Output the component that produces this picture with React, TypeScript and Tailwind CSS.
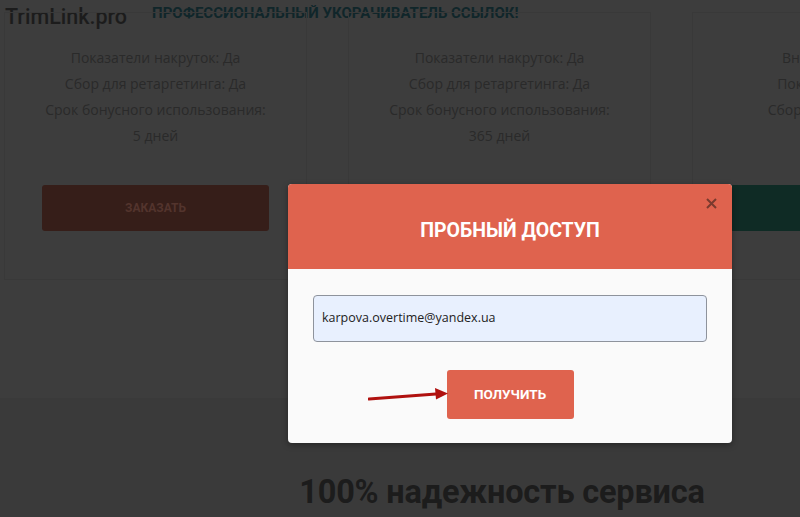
import React from "react";

const cardFont = { fontFamily: '"Open Sans", "Liberation Sans", sans-serif' };
const robo = { fontFamily: 'Roboto, "Liberation Sans", sans-serif' };

function Card({ lines, btnClass, btnText }: { lines: string[]; btnClass: string; btnText: string }) {
  return (
    <div className="w-[303px] shrink-0 border border-[#393939] pt-[32px] pb-[48px] px-[37px] flex flex-col items-center">
      <div className="text-[14px] leading-[26px] text-[#2a2a2a] text-center whitespace-nowrap" style={cardFont}>
        {lines.map((l, i) => (
          <div key={i}>{l === "" ? "\u00a0" : l}</div>
        ))}
      </div>
      <div
        className={`mt-[36px] w-full h-[46px] rounded-[3px] flex items-center justify-center text-[12px] font-bold ${btnClass}`}
        style={robo}
      >
        {btnText}
      </div>
    </div>
  );
}

export default function App() {
  return (
    <div className="relative w-[800px] h-[517px] overflow-hidden bg-[#3d3d3d]">
      <div className="w-[1004px]">
        {/* header */}
        <div className="h-[33px] flex items-center pl-[5px]">
          <span className="text-[21.5px] font-medium text-[#1c1c1c] leading-none" style={robo}>
            TrimLink.pro
          </span>
          <span className="ml-[25px] text-[15px] font-bold text-[#10262a] leading-none -mt-[6px]" style={robo}>
            ПРОФЕССИОНАЛЬНЫЙ УКОРАЧИВАТЕЛЬ ССЫЛОК!
          </span>
        </div>
        {/* cards */}
        <div className="flex gap-[41px] pl-[4px] -mt-[21px]">
          <Card
            lines={["Показатели накруток: Да", "Сбор для ретаргетинга: Да", "Срок бонусного использования:", "5 дней"]}
            btnClass="bg-[#361e19] text-[#53342d]"
            btnText="ЗАКАЗАТЬ"
          />
          <Card
            lines={["Показатели накруток: Да", "Сбор для ретаргетинга: Да", "Срок бонусного использования:", "365 дней"]}
            btnClass="bg-[#361e19] text-[#53342d]"
            btnText="ЗАКАЗАТЬ"
          />
          <Card
            lines={["Внешний сайт: Да", "Покупка ссылок: Да", "Сбор данных о кликах", ""]}
            btnClass="bg-[#0f2b25] text-[#25453e]"
            btnText="ЗАКАЗАТЬ"
          />
        </div>
        {/* lower section */}
        <div className="mt-[118px] bg-[#3a3a3a] h-[200px] flex justify-center pt-[78px]">
          <h2 className="text-[32.5px] font-bold text-[#1c1c1c] leading-none tracking-[-0.2px]" style={robo}>
            100% надежность сервиса
          </h2>
        </div>
      </div>

      {/* modal */}
      <div className="absolute left-[288px] top-[184px] w-[444px] rounded-[4px] overflow-hidden bg-[#fafafa] shadow-[0_2px_6px_rgba(0,0,0,0.35)]">
        <div className="relative h-[85px] bg-[#df634e] flex items-center justify-center pt-[9px]">
          <span className="text-[19.5px] font-bold text-white" style={robo}>
            ПРОБНЫЙ ДОСТУП
          </span>
          <svg className="absolute right-[15px] top-[14px]" width="11" height="11" viewBox="0 0 11 11">
            <path d="M1 1 L10 10 M10 1 L1 10" stroke="#7a3a2e" strokeWidth="2" />
          </svg>
        </div>
        <div className="px-[25px] pt-[26px] pb-[24px] flex flex-col items-center">
          <div
            className="w-full h-[47px] rounded-[4px] border border-[#8e939c] bg-[#e8f0fe] flex items-center pl-[8px] text-[12.5px] text-[#222]"
            style={cardFont}
          >
            karpova.overtime@yandex.ua
          </div>
          <div className="relative mt-[28px]">
            <div
              className="w-[127px] h-[49px] rounded-[3px] bg-[#df634e] flex items-center justify-center text-[13.5px] font-bold text-white"
              style={robo}
            >
              ПОЛУЧИТЬ
            </div>
            <svg className="absolute left-[-79px] top-[15px]" width="82" height="20" viewBox="0 0 82 20">
              <path d="M1 14 L68 9" stroke="#b0110f" strokeWidth="3" strokeLinecap="round" />
              <path d="M67 3 L80 8.5 L68 14.5 Z" fill="#b0110f" />
            </svg>
          </div>
        </div>
      </div>
    </div>
  );
}
